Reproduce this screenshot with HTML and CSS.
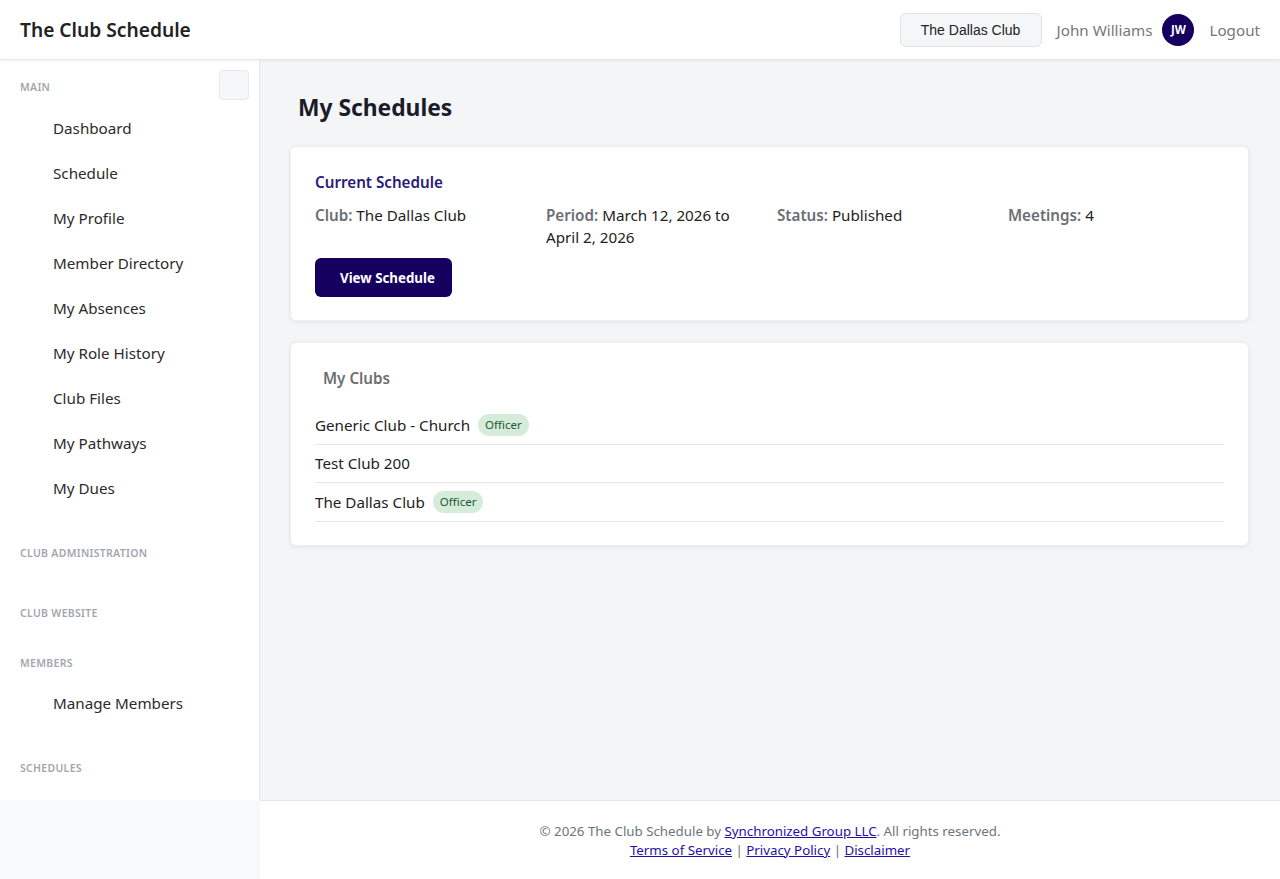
FILE: index.html
```html
<!DOCTYPE html>
<html lang="en">
<head>
  <meta charset="UTF-8" />
  <meta name="viewport" content="width=device-width, initial-scale=1.0" />
  <title>My Schedules | The Club Schedule</title>
  <link rel="stylesheet" href="styles.css">
</head>
<body>
  <header class="topbar">
    <div class="brand">The Club Schedule</div>
    <div class="topbar-right">
      <button class="club-switch">The Dallas Club</button>
      <span class="user-name">John Williams</span>
      <span class="avatar">JW</span>
      <a href="#" class="logout">Logout</a>
    </div>
  </header>

  <div class="layout">
    <aside class="sidebar">
      <div class="sidebar-inner">
        <div class="sidebar-head">
          <span class="nav-label">Main</span>
          <button class="sidebar-toggle"></button>
        </div>
        <ul class="nav-list first">
          <li><a href="#">Dashboard</a></li>
          <li><a href="#">Schedule</a></li>
          <li><a href="#">My Profile</a></li>
          <li><a href="#">Member Directory</a></li>
          <li><a href="#">My Absences</a></li>
          <li><a href="#">My Role History</a></li>
          <li><a href="#">Club Files</a></li>
          <li><a href="#">My Pathways</a></li>
          <li><a href="#">My Dues</a></li>
        </ul>

        <div class="nav-label">Club Administration</div>
        <ul class="nav-list empty"></ul>

        <div class="nav-label">Club Website</div>
        <ul class="nav-list empty tight"></ul>

        <div class="nav-label">Members</div>
        <ul class="nav-list">
          <li><a href="#">Manage Members</a></li>
        </ul>

        <div class="nav-label">Schedules</div>
      </div>
    </aside>

    <div class="content">
      <main class="main">
        <h1 class="page-title">My Schedules</h1>

        <section class="card">
          <h2 class="card-title">Current Schedule</h2>
          <div class="info-grid">
            <div><strong>Club:</strong> The Dallas Club</div>
            <div><strong>Period:</strong> March 12, 2026 to April 2, 2026</div>
            <div><strong>Status:</strong> Published</div>
            <div><strong>Meetings:</strong> 4</div>
          </div>
          <a href="#" class="btn-primary">View Schedule</a>
        </section>

        <section class="card">
          <h2 class="clubs-title">My Clubs</h2>
          <ul class="club-list">
            <li>Generic Club - Church <span class="badge">Officer</span></li>
            <li>Test Club 200</li>
            <li>The Dallas Club <span class="badge">Officer</span></li>
          </ul>
        </section>
      </main>

      <footer class="footer">
        <div>&copy; 2026 The Club Schedule by <a href="#">Synchronized Group LLC</a>. All rights reserved.</div>
        <div><a href="#">Terms of Service</a> | <a href="#">Privacy Policy</a> | <a href="#">Disclaimer</a></div>
      </footer>
    </div>
  </div>
</body>
</html>
```

FILE: styles.css
```css
:root {
  --navy: #16005f;
  --text: #212529;
  --muted: #6c757d;
  --label: #a3a7ad;
  --border: #e4e6ea;
  --page: #f4f5f7;
}

* { box-sizing: border-box; margin: 0; padding: 0; }

html, body {
  height: 100%;
}

body {
  font-family: 'Noto Sans', 'Open Sans', sans-serif;
  color: var(--text);
  background: var(--page);
  display: flex;
  flex-direction: column;
  min-height: 100vh;
}

a { color: inherit; text-decoration: none; }
ul { list-style: none; }
button { font: inherit; cursor: pointer; }

/* top bar */
.topbar {
  height: 60px;
  flex-shrink: 0;
  display: flex;
  align-items: center;
  justify-content: space-between;
  padding: 0 20px;
  background: #fff;
  border-bottom: 1px solid #e6e7ea;
  box-shadow: 0 1px 3px rgba(0, 0, 0, 0.06);
  position: relative;
  z-index: 2;
}

.brand {
  font-size: 19.2px;
  font-weight: 600;
  color: #222;
}

.topbar-right {
  display: flex;
  align-items: center;
}

.club-switch {
  font-family: 'Liberation Sans', Arial, sans-serif;
  font-size: 14px;
  color: #222;
  background: #f5f6f8;
  border: 1px solid #dfe1e5;
  border-radius: 6px;
  height: 34px;
  width: 142px;
  margin-right: 15px;
}

.user-name {
  font-size: 15.2px;
  color: #777;
  margin-right: 10px;
}

.avatar {
  width: 32px;
  height: 32px;
  border-radius: 50%;
  background: var(--navy);
  color: #fff;
  font-size: 11.5px;
  font-weight: 700;
  display: flex;
  align-items: center;
  justify-content: center;
  margin-right: 15px;
}

.logout {
  font-size: 15.2px;
  color: #777;
}

/* layout */
.layout {
  flex: 1;
  display: flex;
}

.sidebar {
  width: 260px;
  flex-shrink: 0;
  background: #f8f9fa;
}

.sidebar-inner {
  background: #fff;
  height: 740px;
  border-right: 1px solid var(--border);
  overflow: hidden;
  padding-top: 10px;
}

.sidebar-head {
  display: flex;
  align-items: center;
  justify-content: space-between;
  padding: 0 10px 0 20px;
  height: 30px;
}

.sidebar-head .nav-label {
  padding: 0;
  margin-top: 4px;
}

.sidebar-toggle {
  width: 30px;
  height: 30px;
  background: #f6f7f8;
  border: 1px solid #e6e8eb;
  border-radius: 4px;
}

.nav-label {
  font-size: 10.5px;
  font-weight: 600;
  line-height: 16px;
  text-transform: uppercase;
  letter-spacing: 0.3px;
  color: var(--label);
  padding-left: 20px;
}

.nav-list {
  margin: 10px 0 34px;
}

.nav-list.first {
  margin-top: 6px;
}

.nav-list.empty {
  margin: 0;
  height: 44px;
}

.nav-list.tight {
  height: 34px;
}

.nav-list a {
  display: block;
  padding: 10px 0 11px 53px;
  font-size: 15.2px;
  line-height: 24px;
  color: #2b2b2b;
}

/* main area */
.content {
  flex: 1;
  display: flex;
  flex-direction: column;
}

.main {
  flex: 1;
  padding: 31px 31px 24px 30px;
}

.page-title {
  font-size: 22.8px;
  font-weight: 700;
  color: #1b1b2a;
  padding-left: 8px;
  line-height: 34px;
  margin-bottom: 21px;
}

.card {
  background: #fff;
  border: 1px solid #eceef1;
  border-radius: 6px;
  box-shadow: 0 1px 4px rgba(0, 0, 0, 0.08);
  padding: 23px 24px 23px;
  margin-bottom: 21px;
}

.card-title {
  font-size: 15.2px;
  font-weight: 600;
  line-height: 24px;
  color: #2a1a78;
  margin-bottom: 10px;
}

.info-grid {
  display: grid;
  grid-template-columns: repeat(4, 216px);
  column-gap: 15px;
  font-size: 15.2px;
  line-height: 22px;
  color: #222;
  margin-bottom: 10px;
}

.info-grid strong {
  color: #6b6e73;
  font-weight: 600;
}

.btn-primary {
  display: inline-flex;
  align-items: center;
  height: 39px;
  padding: 0 17px 0 25px;
  background: var(--navy);
  color: #fff;
  font-size: 13.3px;
  font-weight: 700;
  border-radius: 6px;
}

.clubs-title {
  font-size: 15.2px;
  font-weight: 600;
  line-height: 22px;
  color: #6c6f74;
  padding-left: 8px;
  margin-top: 1px;
  margin-bottom: 17px;
}

.club-list li {
  display: flex;
  align-items: center;
  gap: 8px;
  height: 38.5px;
  font-size: 15.2px;
  color: #222;
  border-bottom: 1px solid var(--border);
}

.badge {
  font-size: 11.5px;
  line-height: 14px;
  padding: 4px 7px;
  border-radius: 11px;
  background: #d5ecdb;
  color: #1e5a2c;
}

/* footer */
.footer {
  background: #fff;
  border-top: 1px solid var(--border);
  height: 79px;
  padding-top: 21px;
  text-align: center;
  font-size: 13.3px;
  line-height: 19px;
  color: #6c757d;
}

.footer a {
  color: #1f0fa8;
  text-decoration: underline;
}
```
